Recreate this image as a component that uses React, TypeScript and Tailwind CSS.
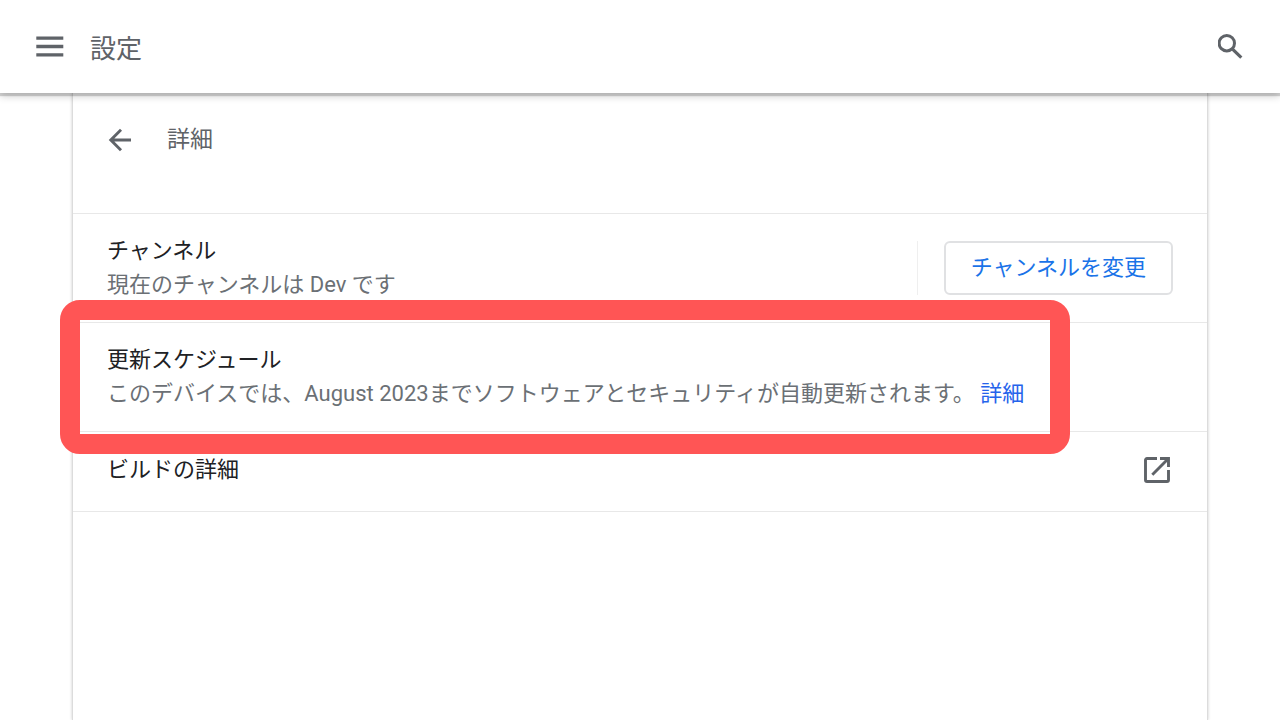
import type { ReactNode } from "react";

function MenuIcon() {
    return (
        <svg width="28" height="24" viewBox="0 0 28 24" fill="none" stroke="currentColor" strokeWidth="3.3">
            <path d="M0.3 4.1h27M0.3 12.5h27M0.3 20.9h27" />
        </svg>
    );
}

function SearchIcon() {
    return (
        <svg width="26" height="26" viewBox="1 0.4 26 26" fill="none" stroke="currentColor" strokeWidth="3">
            <circle cx="9.8" cy="9.6" r="7.7" />
            <path d="M15 15l9.3 9" strokeWidth="3.2" />
        </svg>
    );
}

function BackIcon() {
    return (
        <svg width="24" height="34" viewBox="-1 0 24 34" fill="none" stroke="currentColor" strokeWidth="2.9">
            <path d="M23 17H3M13 6.8 2.8 17 13 27.2" />
        </svg>
    );
}

function OpenInNewIcon() {
    return (
        <svg width="26" height="26" viewBox="0 0 26 26" fill="none" stroke="currentColor" strokeWidth="2.9">
            <path d="M13 1.5H3A1.5 1.5 0 0 0 1.5 3v20A1.5 1.5 0 0 0 3 24.5h20a1.5 1.5 0 0 0 1.5-1.5V13" />
            <path d="M16 1.5h8.5V10M24.2 1.8 8.3 17.7" />
        </svg>
    );
}

function Row({ title, detail, children }: { title: string; detail: ReactNode; children?: ReactNode }) {
    return (
        <div className="relative flex items-center justify-between border-b border-[#e8e8e8] px-[34px] py-5 text-[22px] leading-[34px]">
            <div>
                <h2 className="text-[#202124]">{title}</h2>
                <p className="text-[#6b7075]">{detail}</p>
            </div>
            {children}
        </div>
    );
}

function App() {
    return (
        <div className="flex min-h-screen flex-col bg-white font-['Roboto','Noto_Sans_CJK_JP',sans-serif]" lang="ja">
            <header className="z-10 flex items-start justify-between bg-white px-9 pt-[34px] pb-7 text-[#5f6368] shadow-[0_3px_1px_rgba(0,0,0,0.16),0_3px_8px_rgba(0,0,0,0.2)]">
                <div className="flex items-start gap-[26px]">
                    <button aria-label="メニュー">
                        <MenuIcon />
                    </button>
                    <h1 className="text-[26px] leading-[31px]">設定</h1>
                </div>
                <button aria-label="検索">
                    <SearchIcon />
                </button>
            </header>

            <main className="mx-[72px] flex-1 border-x border-[#dcdcdc] shadow-[0_0_3px_rgba(0,0,0,0.2)]">
                {/* Subpage title */}
                <div className="flex items-start gap-9 border-b border-[#e8e8e8] px-[34px] pt-[30px] pb-14 text-[#5f6368]">
                    <button aria-label="戻る">
                        <BackIcon />
                    </button>
                    <h2 className="text-[23px] leading-[34px]">詳細</h2>
                </div>

                <Row title="チャンネル" detail="現在のチャンネルは Dev です">
                    <div className="border-l border-[#efefef] pl-[26px]">
                        <button className="rounded-md border-2 border-[#e0e1e3] px-[25px] py-2 text-[#1a73e8]">
                            チャンネルを変更
                        </button>
                    </div>
                </Row>

                <Row
                    title="更新スケジュール"
                    detail={
                        <>
                            このデバイスでは、August 2023までソフトウェアとセキュリティが自動更新されます。{" "}
                            <a href="#details" className="text-[#2563eb]">詳細</a>
                        </>
                    }
                >
                    {/* Highlight frame over the update schedule */}
                    <div className="pointer-events-none absolute -top-[23px] right-[137px] -bottom-[23px] -left-[13px] rounded-[20px] border-20 border-[#ff5555]" />
                </Row>

                <div className="flex items-center justify-between border-b border-[#e8e8e8] pt-[21px] pr-[37px] pb-6 pl-[34px] text-[22px] leading-[34px]">
                    <h2 className="text-[#202124]">ビルドの詳細</h2>
                    <button aria-label="ビルドの詳細を開く" className="text-[#5f6368]">
                        <OpenInNewIcon />
                    </button>
                </div>
            </main>
        </div>
    );
}

export default App;
